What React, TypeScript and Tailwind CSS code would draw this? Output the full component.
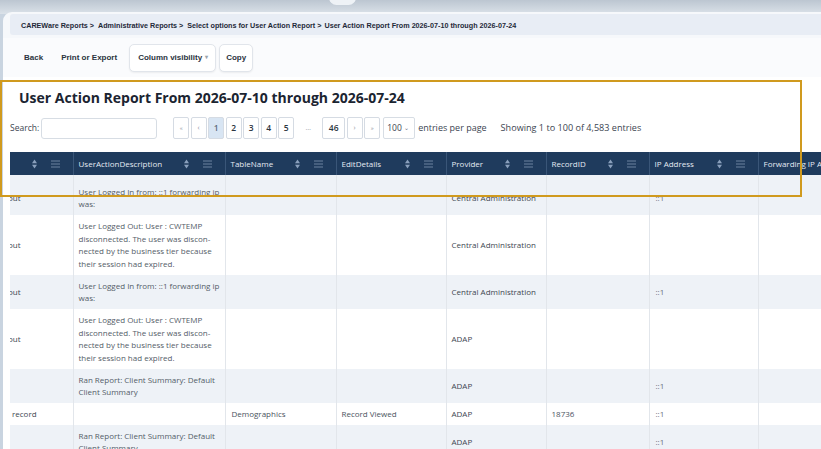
import React from "react";

const cols = [63, 152, 111, 110, 100, 103, 109, 140];
const headers = [
  "",
  "UserActionDescription",
  "TableName",
  "EditDetails",
  "Provider",
  "RecordID",
  "IP Address",
  "Forwarding IP Address",
];

type Row = {
  h: string;
  first: string;
  desc: string[];
  table?: string;
  edit?: string;
  provider?: string;
  record?: string;
  ip?: string;
};

const loggedOut = [
  "User Logged Out: User : CWTEMP",
  "disconnected. The user was discon-",
  "nected by the business tier because",
  "their session had expired.",
];

const rows: Row[] = [
  { h: "h-[40px]", first: "out", desc: ["User Logged In from: ::1 forwarding ip", "was:"], provider: "Central Administration", ip: "::1" },
  { h: "h-[60px]", first: "out", desc: loggedOut, provider: "Central Administration" },
  { h: "h-[34px]", first: "out", desc: ["User Logged In from: ::1 forwarding ip", "was:"], provider: "Central Administration", ip: "::1" },
  { h: "h-[60px]", first: "out", desc: loggedOut, provider: "ADAP" },
  { h: "h-[34px]", first: "", desc: ["Ran Report: Client Summary: Default", "Client Summary"], provider: "ADAP", ip: "::1" },
  { h: "h-[22px]", first: "record", desc: [], table: "Demographics", edit: "Record Viewed", provider: "ADAP", record: "18736", ip: "::1" },
  { h: "h-[34px]", first: "", desc: ["Ran Report: Client Summary: Default", "Client Summary"], provider: "ADAP", ip: "::1" },
];

const SortIcon = () => (
  <svg width="5" height="10" viewBox="0 0 5 10" className="shrink-0">
    <path d="M0 4.2 L2.5 0.5 L5 4.2 Z" fill="#8aa0bd" />
    <path d="M0 5.8 L2.5 9.5 L5 5.8 Z" fill="#8aa0bd" />
  </svg>
);

const MenuIcon = () => (
  <svg width="9" height="8" viewBox="0 0 9 8" className="shrink-0">
    <path d="M0 1h9M0 4h9M0 7h9" stroke="#6d83a0" strokeWidth="1" />
  </svg>
);

const PageBtn = ({ children, active, wide }: { children: React.ReactNode; active?: boolean; wide?: boolean }) => (
  <div
    className={`flex h-[22px] items-center justify-center rounded-[2px] border border-[#d5dbe3] text-[8.5px] font-semibold text-[#2c3540] ${
      wide ? "w-[23px]" : "w-[16px]"
    } ${active ? "bg-[#d8e5f3]" : "bg-white"}`}
  >
    {children}
  </div>
);

export default function App() {
  return (
    <div className="relative h-[449px] w-[821px] overflow-hidden bg-[#c9d4e0] font-['Open_Sans',sans-serif]">
      {/* top band */}
      <div className="absolute left-0 top-0 h-[14px] w-full bg-gradient-to-b from-[#bcc6d1] to-[#dbe2e9]" />
      <div className="absolute left-[329px] top-[-10px] h-[15px] w-[27px] rounded-full bg-[#eef2f6]" />

      <div className="relative ml-[3px] mt-[12px] h-[437px] overflow-hidden rounded-tl-[9px] bg-[#f6f8fb]">
        {/* breadcrumb */}
        <div className="ml-[7px] mt-[2px] flex h-[21px] items-center rounded-l-[3px] bg-[#e8edf5] pl-[11px] pt-[3px] font-['Liberation_Sans',Arial,sans-serif] text-[7.2px] font-bold text-[#1e2938]">
          <span>CAREWare Reports &gt;</span>
          <span className="ml-[4px]">Administrative Reports &gt;</span>
          <span className="ml-[4px]">Select options for User Action Report &gt;</span>
          <span className="ml-[3px]">User Action Report From 2026-07-10 through 2026-07-24</span>
        </div>

        {/* toolbar */}
        <div className="mt-[3px] flex h-[39px] items-center bg-[#fafbfd] pl-[21px] font-['Liberation_Sans',Arial,sans-serif] text-[8px] font-bold text-[#2a3340]">
          <span>Back</span>
          <span className="ml-[18px]">Print or Export</span>
          <div className="ml-[12px] flex h-[28px] w-[87px] items-center rounded-[5px] border border-[#e1e5eb] bg-white pl-[8px] shadow-[0_1px_2px_rgba(0,0,0,0.06)]">
            Column visibility
            <span className="ml-[3px] text-[6px] text-[#9aa3ad]">▾</span>
          </div>
          <div className="ml-[3px] flex h-[28px] w-[34px] items-center justify-center rounded-[5px] border border-[#e1e5eb] bg-white shadow-[0_1px_2px_rgba(0,0,0,0.06)]">
            Copy
          </div>
        </div>

        {/* content */}
        <div className="bg-white pl-[7px] pt-[7px]">
          <h1 className="ml-[9px] h-[28px] text-[14px] font-bold leading-[28px] text-[#1b2431]">
            User Action Report From 2026-07-10 through 2026-07-24
          </h1>

          <div className="mt-[5px] flex h-[22px] items-center text-[8.5px] text-[#3c4551]">
            <span>Search:</span>
            <div className="ml-[2px] h-[21px] w-[116px] rounded-[3px] border border-[#d7dde4] bg-white" />
            <div className="ml-[16px] flex items-center gap-[1.5px]">
              <PageBtn><span className="text-[6px] font-normal text-[#8a939d]">«</span></PageBtn>
              <PageBtn><span className="text-[7px] font-normal text-[#8a939d]">‹</span></PageBtn>
              <PageBtn active><span className="text-[#5c6b7c]">1</span></PageBtn>
              <PageBtn>2</PageBtn>
              <PageBtn>3</PageBtn>
              <PageBtn>4</PageBtn>
              <PageBtn>5</PageBtn>
              <span className="w-[25px] text-center text-[7px] text-[#9aa2ab]">…</span>
              <PageBtn wide>46</PageBtn>
              <PageBtn><span className="text-[7px] font-normal text-[#8a939d]">›</span></PageBtn>
              <PageBtn><span className="text-[6px] font-normal text-[#8a939d]">»</span></PageBtn>
            </div>
            <div className="ml-[3px] flex h-[22px] w-[32px] items-center rounded-[2px] border border-[#d7dde4] pl-[3px]">
              100<span className="ml-[2px] text-[6px] text-[#6b7480]">⌄</span>
            </div>
            <span className="ml-[3px] text-[9px]">entries per page</span>
            <span className="ml-[14px] text-[9.1px]">Showing 1 to 100 of 4,583 entries</span>
          </div>

          {/* table */}
          <div className="mt-[13px] overflow-hidden">
            <table className="table-fixed border-collapse text-[8px]" style={{ width: cols.reduce((a, b) => a + b, 0) }}>
              <colgroup>
                {cols.map((w, i) => (
                  <col key={i} style={{ width: w }} />
                ))}
              </colgroup>
              <thead>
                <tr className="h-[23px] bg-[#1f3b5d] text-[#e4eaf2]">
                  {headers.map((h, i) => (
                    <th key={i} className="border-l border-[#3a5678] px-[5px] text-left font-normal first:border-l-0">
                      <div className="flex items-center">
                        <span className="flex-1 whitespace-nowrap">{h}</span>
                        {i < 7 && (
                          <>
                            <SortIcon />
                            <span className="ml-[14px] mr-[8px]">
                              <MenuIcon />
                            </span>
                          </>
                        )}
                      </div>
                    </th>
                  ))}
                </tr>
              </thead>
              <tbody>
                {rows.map((r, i) => {
                  const pad = i === 0 ? "pt-[6px]" : "";
                  return (
                    <tr key={i} className={`${r.h} ${i % 2 === 0 ? "bg-[#eef2f7]" : "bg-white"}`}>
                      <td className={`overflow-hidden whitespace-nowrap border-l border-[#e2e6eb] text-[#3d4650] first:border-l-0 ${pad}`}>
                        <span className={r.first === "out" ? "-ml-[2px]" : "ml-[2px]"}>{r.first}</span>
                      </td>
                      <td className={`border-l border-[#e2e6eb] px-[5px] leading-[12.5px] text-[#545d68] ${pad}`}>
                        {r.desc.map((l, j) => (
                          <div key={j} className="whitespace-nowrap">{l}</div>
                        ))}
                      </td>
                      <td className={`border-l border-[#e2e6eb] px-[6px] text-[#4a535e] ${pad}`}>{r.table}</td>
                      <td className={`border-l border-[#e2e6eb] px-[5px] text-[#4a535e] ${pad}`}>{r.edit}</td>
                      <td className={`border-l border-[#e2e6eb] px-[5px] text-[#3e4751] ${pad}`}>{r.provider}</td>
                      <td className={`border-l border-[#e2e6eb] px-[5px] text-[#4a535e] ${pad}`}>{r.record}</td>
                      <td className={`border-l border-[#e2e6eb] px-[6px] text-[#6a737d] ${pad}`}>{r.ip}</td>
                      <td className="border-l border-[#e2e6eb]" />
                    </tr>
                  );
                })}
              </tbody>
            </table>
          </div>
        </div>
      </div>

      {/* annotation outline */}
      <div className="pointer-events-none absolute left-0 top-[80px] h-[117px] w-[802px] border-2 border-[#d09a1e]" />
    </div>
  );
}
